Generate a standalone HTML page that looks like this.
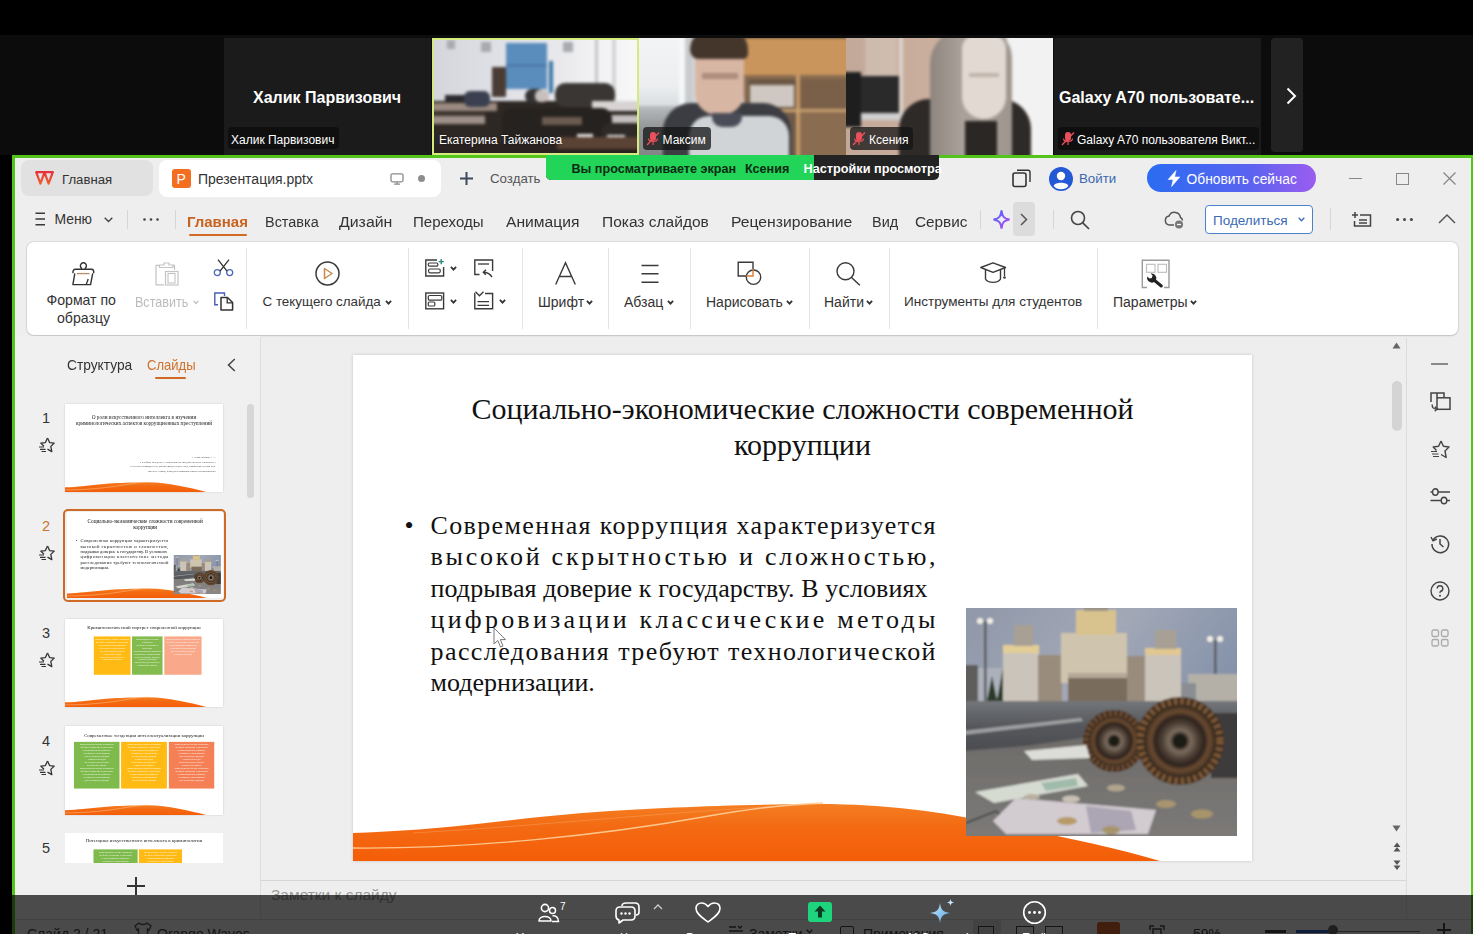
<!DOCTYPE html>
<html><head><meta charset="utf-8">
<style>
*{box-sizing:border-box;margin:0;padding:0}
html,body{width:1473px;height:934px;overflow:hidden;background:#000;font-family:"Liberation Sans",sans-serif}
.a{position:absolute}
.t{position:absolute;white-space:nowrap;line-height:1}
svg{position:absolute;overflow:visible}
</style></head><body>
<!-- gallery strip -->
<div class="a" style="left:0;top:35px;width:1473px;height:120px;background:#0c0c0c"></div>
<!-- tile 1 -->
<div class="a" style="left:224px;top:38px;width:207px;height:117px;background:#1b1b1b"></div>
<div class="t" style="left:253px;top:89.5px;font-size:16px;font-weight:700;color:#fff">Халик Парвизович</div>
<div class="a" style="left:228px;top:127px;width:111px;height:22px;background:#0f0f0f;border-radius:4px"></div>
<div class="t" style="left:231px;top:134px;font-size:12px;color:#fff">Халик Парвизович</div>
<!-- tile 2 -->
<div class="a" id="tile2" style="left:432px;top:38px;width:207px;height:117px;overflow:hidden;background:#d3d4d8">
  <div class="a" style="left:-5px;top:-5px;width:217px;height:127px;filter:blur(1.4px)">
    <div class="a" style="left:0;top:0;width:217px;height:80px;background:linear-gradient(90deg,#d4d5da 0%,#e0e1e6 35%,#e8e8ec 60%,#f2f2f4 78%,#f8f8f8 100%)"></div>
    <div class="a" style="left:168px;top:0;width:3px;height:80px;background:#c4c4c8"></div>
    <div class="a" style="left:185px;top:0;width:4px;height:75px;background:#d4d4d8"></div>
    <div class="a" style="left:20px;top:7px;width:8px;height:9px;background:#a8aab0"></div>
    <div class="a" style="left:54px;top:9px;width:10px;height:10px;background:#a8aab0"></div>
    <div class="a" style="left:136px;top:9px;width:10px;height:10px;background:#a8aab0"></div>
    <div class="a" style="left:79px;top:10px;width:41px;height:46px;background:#5a8cbc"></div>
    <div class="a" style="left:79px;top:32px;width:41px;height:1px;background:#3a5a88"></div>
    <div class="a" style="left:65px;top:34px;width:14px;height:30px;background:#4a3c34"></div>
    <div class="a" style="left:122px;top:28px;width:4px;height:32px;background:#3a78a6"></div>
    <div class="a" style="left:0;top:68px;width:217px;height:59px;background:#2e2824"></div>
    <div class="a" style="left:18px;top:62px;width:22px;height:6px;background:#2a2a2e"></div>
    <div class="a" style="left:0;top:70px;width:70px;height:8px;background:#9a8a80"></div>
    <div class="a" style="left:0;top:79px;width:58px;height:4px;background:#403630"></div>
    <div class="a" style="left:0;top:83px;width:58px;height:8px;background:#9c9088"></div>
    <div class="a" style="left:37px;top:58px;width:26px;height:16px;background:#3b4050;border-radius:6px"></div>
    <div class="a" style="left:98px;top:56px;width:20px;height:14px;background:#333;border-radius:7px"></div>
    <div class="a" style="left:108px;top:57px;width:14px;height:12px;background:#c8c0bc;border-radius:5px"></div>
    <div class="a" style="left:128px;top:50px;width:60px;height:24px;background:#3a3634;border-radius:10px"></div>
    <div class="a" style="left:165px;top:68px;width:52px;height:10px;background:#d8d4d4"></div>
    <div class="a" style="left:160px;top:82px;width:57px;height:12px;background:#c4c0c0"></div>
    <div class="a" style="left:75px;top:75px;width:110px;height:35px;background:#262220;border-radius:10px"></div>
    <div class="a" style="left:115px;top:84px;width:40px;height:8px;background:#6a5a50"></div>
    <div class="a" style="left:175px;top:90px;width:42px;height:25px;background:#2e2a28;border-radius:8px"></div>
    <div class="a" style="left:150px;top:101px;width:16px;height:7px;background:#e8e8e8"></div>
    <div class="a" style="left:180px;top:102px;width:18px;height:8px;background:#e8e8e8"></div>
    <div class="a" style="left:0;top:110px;width:217px;height:17px;background:#2a2220"></div>
    <div class="a" style="left:130px;top:104px;width:87px;height:12px;background:#5a4234"></div>
  </div>
  <div class="a" style="left:0;top:0;width:207px;height:117px;border:2px solid #d6eb7e"></div>
  <div class="t" style="left:7px;top:96px;font-size:12px;color:#fff;text-shadow:0 0 2px rgba(0,0,0,0.6)">Екатерина Тайжанова</div>
</div>
<!-- tile 3 -->
<div class="a" id="tile3" style="left:639px;top:38px;width:207px;height:117px;overflow:hidden;background:#9a9a9a">
  <div class="a" style="left:-5px;top:-5px;width:217px;height:127px;filter:blur(1.6px)">
    <div class="a" style="left:0;top:0;width:60px;height:75px;background:linear-gradient(180deg,#f2f4f5 0%,#eceef0 70%,#d8dcde 100%)"></div>
    <div class="a" style="left:0;top:73px;width:60px;height:60px;background:linear-gradient(180deg,#b8bcbe 0%,#909294 40%,#7d7f82 100%)"></div>
    <div class="a" style="left:45px;top:0;width:6px;height:75px;background:#f6f8f8"></div>
    <div class="a" style="left:51px;top:0;width:8px;height:75px;background:#c8ccce"></div>
    <div class="a" style="left:59px;top:0;width:52px;height:75px;background:#d4d8da"></div>
    <div class="a" style="left:110px;top:0;width:107px;height:5px;background:#4a3c30"></div>
    <div class="a" style="left:110px;top:5px;width:107px;height:37px;background:#c9955c"></div>
    <div class="a" style="left:110px;top:42px;width:107px;height:85px;background:#8a6c50"></div>
    <div class="a" style="left:114px;top:46px;width:48px;height:30px;background:#6a5644"></div>
    <div class="a" style="left:116px;top:52px;width:44px;height:22px;background:#cfc8c2"></div>
    <div class="a" style="left:166px;top:46px;width:48px;height:30px;background:#7a6048"></div>
    <div class="a" style="left:162px;top:42px;width:4px;height:85px;background:#c89a68"></div>
    <div class="a" style="left:110px;top:76px;width:107px;height:3px;background:#c8a070"></div>
    <div class="a" style="left:114px;top:80px;width:48px;height:47px;background:#6e5a48"></div>
    <div class="a" style="left:29px;top:70px;width:128px;height:62px;background:#3b3d42;border-radius:28px 28px 0 0"></div>
    <div class="a" style="left:61px;top:10px;width:49px;height:72px;background:#d8b6a4;border-radius:12px 12px 22px 22px"></div>
    <div class="a" style="left:56px;top:-6px;width:58px;height:32px;background:#45362c;border-radius:26px 26px 6px 10px"></div>
    <div class="a" style="left:68px;top:40px;width:36px;height:6px;background:#9a7a6a;opacity:0.7"></div>
    <div class="a" style="left:55px;top:83px;width:100px;height:50px;background:#d0d4d6;border-radius:20px 20px 0 0"></div>
    <div class="a" style="left:78px;top:80px;width:30px;height:14px;background:#4a4c58;border-radius:0 0 10px 10px"></div>
  </div>
  <div class="a" style="left:4px;top:89px;width:68px;height:23px;background:rgba(20,20,20,0.75);border-radius:4px"></div>
  <svg style="left:7px;top:93px" width="14" height="15" viewBox="0 0 14 15"><rect x="4" y="1" width="6" height="9" rx="3" fill="#e8505b"/><path d="M2.5 7.5 C2.5 11.5 11.5 11.5 11.5 7.5 M7 11 V14" fill="none" stroke="#e8505b" stroke-width="1.2"/><path d="M1 14 L13 1.5" stroke="#e8505b" stroke-width="1.4"/></svg>
  <div class="t" style="left:23.5px;top:96px;font-size:12px;color:#fff">Максим</div>
</div>
<!-- tile 4 -->
<div class="a" id="tile4" style="left:846px;top:38px;width:207px;height:117px;overflow:hidden;background:#bbb">
  <div class="a" style="left:-5px;top:-5px;width:217px;height:127px;filter:blur(1.6px)">
    <div class="a" style="left:0;top:0;width:120px;height:127px;background:linear-gradient(90deg,#c1a898 0%,#c9ad9c 60%,#cdb09e 100%)"></div>
    <div class="a" style="left:24px;top:0;width:32px;height:45px;background:#d8ccc4;opacity:0.5"></div>
    <div class="a" style="left:58px;top:0;width:4px;height:90px;background:#dcd2cc"></div>
    <div class="a" style="left:0;top:39px;width:20px;height:55px;background:#1e1e1e"></div>
    <div class="a" style="left:20px;top:43px;width:38px;height:38px;background:#2a2a2a"></div>
    <div class="a" style="left:20px;top:80px;width:40px;height:7px;background:#d0d0d0"></div>
    <div class="a" style="left:166px;top:0;width:51px;height:127px;background:#f2f2f2"></div>
    <div class="a" style="left:58px;top:66px;width:132px;height:62px;background:#2e2a28;border-radius:30px 30px 0 0"></div>
    <div class="a" style="left:89px;top:-5px;width:82px;height:132px;background:linear-gradient(90deg,#8e867e 0%,#aaa29a 40%,#9e968e 100%);border-radius:36px 30px 0 0"></div>
    <div class="a" style="left:121px;top:2px;width:44px;height:84px;background:#e2dad2;border-radius:14px 14px 22px 22px"></div>
    <div class="a" style="left:128px;top:40px;width:30px;height:4px;background:#a89890;opacity:0.6"></div>
    <div class="a" style="left:124px;top:88px;width:32px;height:39px;background:#2b2725"></div>
  </div>
  <div class="a" style="left:4px;top:89px;width:63px;height:23px;background:rgba(20,20,20,0.75);border-radius:4px"></div>
  <svg style="left:6px;top:93px" width="14" height="15" viewBox="0 0 14 15"><rect x="4" y="1" width="6" height="9" rx="3" fill="#e8505b"/><path d="M2.5 7.5 C2.5 11.5 11.5 11.5 11.5 7.5 M7 11 V14" fill="none" stroke="#e8505b" stroke-width="1.2"/><path d="M1 14 L13 1.5" stroke="#e8505b" stroke-width="1.4"/></svg>
  <div class="t" style="left:23px;top:96px;font-size:12px;color:#fff">Ксения</div>
</div>
<!-- tile 5 -->
<div class="a" style="left:1054px;top:38px;width:207px;height:117px;background:#1b1b1b"></div>
<div class="t" style="left:1059px;top:89.5px;font-size:16px;font-weight:700;color:#fff">Galaxy A70 пользовате...</div>
<div class="a" style="left:1058px;top:127px;width:201px;height:23px;background:#0f0f0f;border-radius:4px"></div>
<svg style="left:1061px;top:131px" width="14" height="15" viewBox="0 0 14 15"><rect x="4" y="1" width="6" height="9" rx="3" fill="#e8505b"/><path d="M2.5 7.5 C2.5 11.5 11.5 11.5 11.5 7.5 M7 11 V14" fill="none" stroke="#e8505b" stroke-width="1.2"/><path d="M1 14 L13 1.5" stroke="#e8505b" stroke-width="1.4"/></svg>
<div class="t" style="left:1077px;top:134px;font-size:12px;color:#fff">Galaxy A70 пользователя Викт...</div>
<!-- next arrow -->
<div class="a" style="left:1271px;top:38px;width:32px;height:114px;background:#222;border-radius:4px"></div>
<svg style="left:1286px;top:87px" width="11" height="18" viewBox="0 0 11 18"><path d="M1.5 1.5 L9 9 L1.5 16.5" fill="none" stroke="#fff" stroke-width="2"/></svg>

<!-- shared screen -->
<div class="a" id="screen" style="left:12px;top:155px;width:1461px;height:779px;background:#52c41a">
  <div class="a" style="left:3px;top:3px;width:1456px;height:776px;background:#eeeeee;overflow:hidden" id="wps">
  </div>
</div>

<!-- ===== WPS title bar ===== -->
<div class="a" style="left:21px;top:160px;width:132px;height:36px;background:#e1e1e1;border-radius:8px"></div>
<svg style="left:35px;top:171px" width="19" height="14" viewBox="0 0 19 14"><defs><linearGradient id="wl" x1="0" y1="0" x2="0" y2="1"><stop offset="0" stop-color="#e8303a"/><stop offset="1" stop-color="#f0602a"/></linearGradient></defs><path d="M1.2 1.2 H9.6 L5.4 12.6 Z M9.4 1.2 H17.8 L13.6 12.6 Z" fill="none" stroke="url(#wl)" stroke-width="2.2" stroke-linejoin="round"/></svg>
<div class="t" style="left:62px;top:173px;font-size:13.2px;color:#333">Главная</div>
<div class="a" style="left:159px;top:160px;width:282px;height:37px;background:#fff;border-radius:8px"></div>
<div class="a" style="left:172px;top:169px;width:19px;height:19px;background:#f46e22;border-radius:3px"></div>
<div class="t" style="left:176.5px;top:171.5px;font-size:14px;color:#fff">P</div>
<div class="t" style="left:198px;top:172px;font-size:14px;color:#333">Презентация.pptx</div>
<svg style="left:390px;top:173px" width="14" height="12" viewBox="0 0 14 12"><rect x="1" y="0.8" width="12" height="8" rx="1.5" fill="none" stroke="#8a8a8a" stroke-width="1.3"/><path d="M4 11.2 H10 M7 9 V11" stroke="#8a8a8a" stroke-width="1.3"/></svg>
<div class="a" style="left:418px;top:175px;width:7px;height:7px;background:#8d8d8d;border-radius:50%"></div>
<svg style="left:459px;top:171px" width="15" height="15" viewBox="0 0 15 15"><path d="M7.5 1 V14 M1 7.5 H14" stroke="#3d4a5c" stroke-width="2"/></svg>
<div class="t" style="left:490px;top:172px;font-size:13.3px;color:#555">Создать</div>

<svg style="left:1012px;top:169px" width="19" height="19" viewBox="0 0 19 19"><rect x="1" y="4" width="13" height="13.5" rx="2" fill="none" stroke="#333" stroke-width="1.6"/><path d="M5 1.2 H16 a2 2 0 0 1 2 2 V13" fill="none" stroke="#333" stroke-width="1.4"/></svg>
<svg style="left:1049px;top:167px" width="24" height="24" viewBox="0 0 24 24"><circle cx="12" cy="12" r="12" fill="#2459d6"/><circle cx="12" cy="9" r="4.2" fill="#fff"/><path d="M4.6 19 C6 14.8 18 14.8 19.4 19 C17.5 21.3 15 22.3 12 22.3 C9 22.3 6.5 21.3 4.6 19Z" fill="#fff"/></svg>
<div class="t" style="left:1079px;top:172px;font-size:13.3px;color:#3a68b0">Войти</div>
<div class="a" style="left:1147px;top:164px;width:169px;height:28px;border-radius:14px;background:linear-gradient(90deg,#2a6cf2 0%,#5a63f0 60%,#9a5df0 100%)"></div>
<svg style="left:1167px;top:170px" width="14" height="17" viewBox="0 0 14 17"><path d="M9 0.5 L1.2 9.5 H6.2 L4.6 16.5 L12.8 7 H7.6 Z" fill="#fff" stroke="#fff" stroke-width="0.6" stroke-linejoin="round"/></svg>
<div class="t" style="left:1186.5px;top:173px;font-size:13.8px;color:#fff">Обновить сейчас</div>
<div class="a" style="left:1349px;top:177.5px;width:13px;height:1.3px;background:#888"></div>
<div class="a" style="left:1396px;top:172.5px;width:12.5px;height:12.5px;border:1.3px solid #888"></div>
<svg style="left:1443px;top:172px" width="13" height="13" viewBox="0 0 13 13"><path d="M0.5 0.5 L12.5 12.5 M12.5 0.5 L0.5 12.5" stroke="#888" stroke-width="1.3"/></svg>

<!-- ===== menu row ===== -->
<svg style="left:35px;top:212px" width="11" height="14" viewBox="0 0 11 14"><path d="M0.5 1.2 H10 M0.5 7 H10 M0.5 12.8 H10" stroke="#3a3a3a" stroke-width="1.4"/></svg>
<div class="t" style="left:54.5px;top:213.1px;font-size:13.9px;color:#333">Меню</div>
<svg style="left:103.5px;top:217px" width="9" height="6" viewBox="0 0 9 6"><path d="M0.7 0.8 L4.5 4.6 L8.3 0.8" fill="none" stroke="#444" stroke-width="1.4"/></svg>
<div class="a" style="left:127px;top:210px;width:1px;height:19px;background:#d6d6d6"></div>
<svg style="left:143px;top:218px" width="16" height="3" viewBox="0 0 16 3"><circle cx="1.5" cy="1.5" r="1.3" fill="#444"/><circle cx="8" cy="1.5" r="1.3" fill="#444"/><circle cx="14.5" cy="1.5" r="1.3" fill="#444"/></svg>
<div class="a" style="left:175px;top:210px;width:1px;height:19px;background:#d6d6d6"></div>
<div class="t" style="left:186.6px;top:213.5px;font-size:15.4px;font-weight:700;color:#c8621e;transform:scaleX(0.973);transform-origin:0 0">Главная</div>
<div class="a" style="left:189px;top:233.5px;width:57.5px;height:2.5px;background:#d06a24;border-radius:2px"></div>
<div class="t" style="left:265px;top:213.5px;font-size:15.4px;color:#333;transform:scaleX(0.939);transform-origin:0 0">Вставка</div>
<div class="t" style="left:338.5px;top:213.5px;font-size:15.4px;color:#333;transform:scaleX(1.031);transform-origin:0 0">Дизайн</div>
<div class="t" style="left:413px;top:213.5px;font-size:15.4px;color:#333;transform:scaleX(0.978);transform-origin:0 0">Переходы</div>
<div class="t" style="left:506px;top:213.5px;font-size:15.4px;color:#333;transform:scaleX(1.017);transform-origin:0 0">Анимация</div>
<div class="t" style="left:601.8px;top:213.5px;font-size:15.4px;color:#333;transform:scaleX(1.008);transform-origin:0 0">Показ слайдов</div>
<div class="t" style="left:731px;top:213.5px;font-size:15.4px;color:#333;transform:scaleX(1.021);transform-origin:0 0">Рецензирование</div>
<div class="t" style="left:871.9px;top:213.5px;font-size:15.4px;color:#333;transform:scaleX(0.939);transform-origin:0 0">Вид</div>
<div class="t" style="left:914.7px;top:213.5px;font-size:15.4px;color:#333;transform:scaleX(0.996);transform-origin:0 0">Сервис</div>
<div class="a" style="left:980px;top:210px;width:1px;height:19px;background:#d6d6d6"></div>
<svg style="left:993px;top:210px" width="17" height="19" viewBox="0 0 17 19"><defs><linearGradient id="ai" x1="0" y1="0" x2="1" y2="1"><stop offset="0" stop-color="#4b6bff"/><stop offset="1" stop-color="#b548f0"/></linearGradient></defs><path d="M8.5 0.5 C9.3 6.5 10.5 8.5 16.5 9.5 C10.5 10.5 9.3 12.5 8.5 18.5 C7.7 12.5 6.5 10.5 0.5 9.5 C6.5 8.5 7.7 6.5 8.5 0.5Z" fill="none" stroke="url(#ai)" stroke-width="2"/></svg>
<div class="a" style="left:1013px;top:202px;width:22px;height:34px;background:#dcdcdc;border-radius:4px"></div>
<svg style="left:1020px;top:213px" width="8" height="13" viewBox="0 0 8 13"><path d="M1 1 L6.5 6.5 L1 12" fill="none" stroke="#555" stroke-width="1.5"/></svg>
<div class="a" style="left:1053px;top:210px;width:1px;height:19px;background:#d6d6d6"></div>
<svg style="left:1070px;top:210px" width="20" height="20" viewBox="0 0 20 20"><circle cx="8" cy="8" r="6.5" fill="none" stroke="#444" stroke-width="1.6"/><path d="M12.8 12.8 L19 19" stroke="#444" stroke-width="1.7"/></svg>
<svg style="left:1164px;top:211px" width="21" height="18" viewBox="0 0 21 18"><path d="M10 14 H5.5 A4.5 4.5 0 0 1 5 5.1 A6 6 0 0 1 16.5 6.5 A3.7 3.7 0 0 1 18.5 9.5" fill="none" stroke="#555" stroke-width="1.5"/><circle cx="15" cy="13.5" r="4" fill="#777"/><path d="M13 13.5 H17" stroke="#fff" stroke-width="1.3"/></svg>
<div class="a" style="left:1205px;top:205px;width:108px;height:29px;border:1px solid #4c82cc;border-radius:4px;background:#fff"></div>
<div class="t" style="left:1213px;top:214px;font-size:13.5px;color:#3a6ab4">Поделиться</div>
<svg style="left:1298px;top:217px" width="7" height="5" viewBox="0 0 7 5"><path d="M0.7 0.8 L3.5 3.7 L6.3 0.8" fill="none" stroke="#3a6ab4" stroke-width="1.3"/></svg>
<div class="a" style="left:1330px;top:208px;width:1px;height:22px;background:#d6d6d6"></div>
<svg style="left:1352px;top:211px" width="20" height="17" viewBox="0 0 20 17"><path d="M3 1 V7 M0 4 H6" stroke="#444" stroke-width="1.5"/><path d="M8 4 H18.5 V15 H2.5 V10" fill="none" stroke="#444" stroke-width="1.5"/><path d="M7 9 H15 M7 12 H15" stroke="#444" stroke-width="1.3"/></svg>
<svg style="left:1396px;top:218px" width="17" height="3" viewBox="0 0 17 3"><circle cx="1.6" cy="1.5" r="1.5" fill="#444"/><circle cx="8.5" cy="1.5" r="1.5" fill="#444"/><circle cx="15.4" cy="1.5" r="1.5" fill="#444"/></svg>
<svg style="left:1438px;top:214px" width="18" height="10" viewBox="0 0 18 10"><path d="M1 9 L9 1 L17 9" fill="none" stroke="#555" stroke-width="1.5"/></svg>


<!-- ===== ribbon ===== -->
<div class="a" style="left:27px;top:242px;width:1431px;height:93px;background:#fff;border-radius:7px;box-shadow:0 0 0 1px rgba(0,0,0,0.07),0 1px 2px rgba(0,0,0,0.12)"></div>
<svg style="left:72px;top:262px" width="23" height="24" viewBox="0 0 23 24"><path d="M9.4 7.3 V6 A3 3 0 1 1 13.4 6 V7.3" fill="none" stroke="#333" stroke-width="1.4"/><path d="M1 11.3 V9.5 A2.2 2.2 0 0 1 3.2 7.3 H19.5 A2.2 2.2 0 0 1 21.7 9.5 V11.3" fill="none" stroke="#333" stroke-width="1.4"/><path d="M2.8 11.3 L0.9 22.6 H18.6 L20.7 11.3" fill="none" stroke="#333" stroke-width="1.4" stroke-linejoin="round"/><path d="M5 11.6 H17.5" stroke="#b88a6a" stroke-width="1.3"/><path d="M16.2 17 L14.4 22" stroke="#333" stroke-width="1.3"/></svg>
<div class="t" style="left:46.5px;top:292.6px;font-size:14.1px;color:#333">Формат по</div>
<div class="t" style="left:57px;top:311.4px;font-size:14.1px;color:#333">образцу</div>
<svg style="left:155px;top:262px" width="25" height="24" viewBox="0 0 25 24"><path d="M4.5 3.3 H1 V22.8 H9" fill="none" stroke="#c4c4c4" stroke-width="1.2"/><path d="M18 3.3 H19.5 V8" fill="none" stroke="#c4c4c4" stroke-width="1.2"/><path d="M4.5 5.5 V3 H9 V1 H14 V3 H18 V5.5 Z" fill="none" stroke="#c4c4c4" stroke-width="1.2"/><rect x="10.5" y="9.5" width="12.5" height="13.5" fill="none" stroke="#c4c4c4" stroke-width="1.2"/><rect x="13" y="11.5" width="7" height="9.5" fill="none" stroke="#c4c4c4" stroke-width="1.1"/></svg>
<div class="t" style="left:134.5px;top:294.5px;font-size:14.1px;color:#bbb;transform:scaleX(0.89);transform-origin:0 0">Вставить</div>
<svg style="left:193px;top:300px" width="6" height="5" viewBox="0 0 6 5"><path d="M0.6 0.8 L3 3.6 L5.4 0.8" fill="none" stroke="#bbb" stroke-width="1.3"/></svg>
<svg style="left:213px;top:259px" width="21" height="18" viewBox="0 0 21 18"><circle cx="4.3" cy="13.6" r="3" fill="none" stroke="#5068b8" stroke-width="1.3"/><circle cx="16.7" cy="13.6" r="3" fill="none" stroke="#5068b8" stroke-width="1.3"/><path d="M7 12.2 L16 0.6 M14 12.2 L5 0.6" stroke="#333" stroke-width="1.3"/></svg>
<svg style="left:213px;top:292px" width="21" height="19" viewBox="0 0 21 19"><path d="M11.5 4 V1 H1.8 V12.8 H5" fill="none" stroke="#4a5cb8" stroke-width="1.4"/><path d="M8 5.5 H14.5 L19.6 10.5 V18 H8 Z" fill="none" stroke="#333" stroke-width="1.5" stroke-linejoin="round"/><path d="M14.2 5.5 V10.8 H19.6" fill="none" stroke="#333" stroke-width="1.3"/></svg>
<div class="a" style="left:246px;top:248px;width:1px;height:81px;background:#e4e4e4"></div>

<svg style="left:315px;top:261px" width="25" height="25" viewBox="0 0 25 25"><circle cx="12.5" cy="12.5" r="11.5" fill="none" stroke="#3a3a3a" stroke-width="1.5"/><path d="M9.5 7.5 L17 12.5 L9.5 17.5 Z" fill="none" stroke="#c9874c" stroke-width="1.5" stroke-linejoin="round"/></svg>
<div class="t" style="left:262.5px;top:295px;font-size:13.4px;color:#333">С текущего слайда</div>
<svg style="left:385px;top:300px" width="7" height="5" viewBox="0 0 7 5"><path d="M0.9 0.9 L3.5 3.6 L6.1 0.9" fill="none" stroke="#333" stroke-width="1.8"/></svg>
<div class="a" style="left:408px;top:248px;width:1px;height:81px;background:#e4e4e4"></div>

<svg style="left:425px;top:259px" width="20" height="18" viewBox="0 0 20 18"><path d="M12 1 H0.8 V17 H18.6 V8" fill="none" stroke="#3a3a3a" stroke-width="1.4"/><rect x="3.3" y="4" width="9.5" height="3.2" rx="1.2" fill="none" stroke="#3a3a3a" stroke-width="1.2"/><rect x="3.6" y="10" width="11.6" height="3.8" rx="1.2" fill="none" stroke="#3a3a3a" stroke-width="1.2"/><path d="M16.2 0 V5.2 M13.6 2.6 H18.8" stroke="#2a8a78" stroke-width="1.4"/></svg>
<svg style="left:450px;top:266px" width="7" height="5" viewBox="0 0 7 5"><path d="M0.9 0.9 L3.5 3.6 L6.1 0.9" fill="none" stroke="#333" stroke-width="1.8"/></svg>
<svg style="left:474px;top:259px" width="20" height="19" viewBox="0 0 20 19"><path d="M5.5 15.5 H0.8 V1 H18.6 V12" fill="none" stroke="#3a3a3a" stroke-width="1.4"/><path d="M4 5 H15" stroke="#3a3a3a" stroke-width="1.3"/><path d="M18 18 C16 15 13 13.2 9.5 13.2 M12 10.8 L9.3 13.2 L11.8 15.8" fill="none" stroke="#3a3a3a" stroke-width="1.4"/></svg>
<svg style="left:425px;top:292px" width="20" height="18" viewBox="0 0 20 18"><rect x="0.8" y="1" width="17.8" height="15.8" fill="none" stroke="#3a3a3a" stroke-width="1.4"/><rect x="3.3" y="3.5" width="13.5" height="4.7" rx="1.3" fill="none" stroke="#3a3a3a" stroke-width="1.2"/><rect x="3.3" y="10" width="6.5" height="4" rx="1.1" fill="none" stroke="#3a3a3a" stroke-width="1.2"/></svg>
<svg style="left:450px;top:299px" width="7" height="5" viewBox="0 0 7 5"><path d="M0.9 0.9 L3.5 3.6 L6.1 0.9" fill="none" stroke="#333" stroke-width="1.8"/></svg>
<svg style="left:474px;top:291px" width="20" height="19" viewBox="0 0 20 19"><path d="M1 2.5 H0.8 V17.7 H18.6 V2.5 H11" fill="none" stroke="#3a3a3a" stroke-width="1.4"/><path d="M1.5 0.8 L5.5 4.8 L9.5 0.8" fill="none" stroke="#3a3a3a" stroke-width="1.4"/><path d="M3.5 10.7 H15 M3.5 14.3 H15" stroke="#3a3a3a" stroke-width="1.3"/></svg>
<svg style="left:499px;top:299px" width="7" height="5" viewBox="0 0 7 5"><path d="M0.9 0.9 L3.5 3.6 L6.1 0.9" fill="none" stroke="#333" stroke-width="1.8"/></svg>
<div class="a" style="left:522px;top:248px;width:1px;height:81px;background:#e4e4e4"></div>

<svg style="left:555px;top:262px" width="21" height="23" viewBox="0 0 21 23"><path d="M0.7 22.5 L10.5 0.8 L20.3 22.5 M4.5 14.5 H16.5" fill="none" stroke="#3a3a3a" stroke-width="1.4"/></svg>
<div class="t" style="left:538px;top:295px;font-size:14px;color:#333">Шрифт</div>
<svg style="left:586px;top:300px" width="7" height="5" viewBox="0 0 7 5"><path d="M0.9 0.9 L3.5 3.6 L6.1 0.9" fill="none" stroke="#333" stroke-width="1.8"/></svg>
<div class="a" style="left:608px;top:248px;width:1px;height:81px;background:#e4e4e4"></div>
<svg style="left:641px;top:264px" width="18" height="20" viewBox="0 0 18 20"><path d="M0.5 1.5 H17.5 M0.5 9.8 H17.5 M0.5 18.2 H17.5" stroke="#3a3a3a" stroke-width="1.4"/></svg>
<div class="t" style="left:624px;top:295px;font-size:14px;color:#333">Абзац</div>
<svg style="left:667px;top:300px" width="7" height="5" viewBox="0 0 7 5"><path d="M0.9 0.9 L3.5 3.6 L6.1 0.9" fill="none" stroke="#333" stroke-width="1.8"/></svg>
<div class="a" style="left:690px;top:248px;width:1px;height:81px;background:#e4e4e4"></div>
<svg style="left:737px;top:261px" width="25" height="25" viewBox="0 0 25 25"><path d="M16 8 V1.2 H1.2 V15 H9" fill="none" stroke="#3a3a3a" stroke-width="1.4"/><circle cx="16.5" cy="16.2" r="7.2" fill="none" stroke="#3a3a3a" stroke-width="1.4"/><path d="M9.3 15 H16 V8.5" fill="none" stroke="#e07a3a" stroke-width="1.4"/></svg>
<div class="t" style="left:706px;top:295px;font-size:14px;color:#333">Нарисовать</div>
<svg style="left:786px;top:300px" width="7" height="5" viewBox="0 0 7 5"><path d="M0.9 0.9 L3.5 3.6 L6.1 0.9" fill="none" stroke="#333" stroke-width="1.8"/></svg>
<div class="a" style="left:808.5px;top:248px;width:1px;height:81px;background:#e4e4e4"></div>
<svg style="left:836px;top:262px" width="25" height="24" viewBox="0 0 25 24"><circle cx="9.5" cy="9.3" r="8.5" fill="none" stroke="#3a3a3a" stroke-width="1.4"/><path d="M15.5 15.5 L23.8 23.3" stroke="#3a3a3a" stroke-width="1.5"/></svg>
<div class="t" style="left:824px;top:295px;font-size:14px;color:#333">Найти</div>
<svg style="left:866px;top:300px" width="7" height="5" viewBox="0 0 7 5"><path d="M0.9 0.9 L3.5 3.6 L6.1 0.9" fill="none" stroke="#333" stroke-width="1.8"/></svg>
<div class="a" style="left:888.5px;top:248px;width:1px;height:81px;background:#e4e4e4"></div>
<svg style="left:980px;top:262px" width="27" height="22" viewBox="0 0 27 22"><path d="M13 0.8 L25.5 5.5 L13 10.3 L0.8 5.5 Z" fill="none" stroke="#3a3a3a" stroke-width="1.4" stroke-linejoin="round"/><path d="M5.5 7.5 V17 C8 21.5 18 21.5 20.5 17 V7.5" fill="none" stroke="#3a3a3a" stroke-width="1.4"/><path d="M24.5 6 V14" stroke="#3a3a3a" stroke-width="1.3"/><circle cx="24.5" cy="15.5" r="1.3" fill="#3a3a3a"/></svg>
<div class="t" style="left:904px;top:295px;font-size:13.55px;color:#333">Инструменты для студентов</div>
<div class="a" style="left:1097px;top:248px;width:1px;height:81px;background:#e4e4e4"></div>
<svg style="left:1141px;top:259px" width="30" height="30" viewBox="0 0 30 30"><path d="M6 28.5 H1.3 V1.3 H28 V28.5 H23" fill="none" stroke="#9a9a9a" stroke-width="1.4"/><rect x="5.5" y="5.3" width="8.5" height="8" fill="none" stroke="#bdbdbd" stroke-width="1.1"/><rect x="17" y="5.3" width="8.5" height="8" fill="none" stroke="#bdbdbd" stroke-width="1.1"/><path d="M13 21 L20.3 27" stroke="#222" stroke-width="3" stroke-linecap="round"/><path d="M9.6 14.6 L11.6 16.6 L10.8 18.9 L8.4 19.6 L6.3 17.5 A4.8 4.8 0 0 0 14.8 21.6 A4.8 4.8 0 0 0 9.6 14.6Z" fill="#222"/></svg>
<div class="t" style="left:1113px;top:295px;font-size:14px;color:#333">Параметры</div>
<svg style="left:1190px;top:300px" width="7" height="5" viewBox="0 0 7 5"><path d="M0.9 0.9 L3.5 3.6 L6.1 0.9" fill="none" stroke="#333" stroke-width="1.8"/></svg>


<!-- ===== left panel ===== -->
<div class="a" style="left:15px;top:336px;width:245px;height:583px;background:#f0f0f0"></div>
<div class="t" style="left:66.7px;top:358px;font-size:14.3px;color:#333;transform:scaleX(0.962);transform-origin:0 0">Структура</div>
<div class="t" style="left:146.5px;top:358px;font-size:14.3px;color:#d0702a;transform:scaleX(0.912);transform-origin:0 0">Слайды</div>
<div class="a" style="left:155px;top:376.5px;width:31px;height:2.5px;background:#d06a24;border-radius:2px"></div>
<svg style="left:227px;top:358px" width="9" height="14" viewBox="0 0 9 14"><path d="M7.8 1 L1.5 7 L7.8 13" fill="none" stroke="#444" stroke-width="1.5"/></svg>
<div class="a" style="left:260px;top:338px;width:1px;height:600px;background:#dcdcdc"></div>
<div class="a" style="left:247px;top:404px;width:7px;height:94px;background:#d6d6d6;border-radius:4px"></div>

<div class="t" style="left:42px;top:411px;font-size:14.5px;color:#333">1</div>
<div class="t" style="left:42px;top:518.5px;font-size:14.5px;color:#c8742e">2</div>
<div class="t" style="left:42px;top:626px;font-size:14.5px;color:#333">3</div>
<div class="t" style="left:42px;top:733.5px;font-size:14.5px;color:#333">4</div>
<div class="t" style="left:42px;top:841px;font-size:14.5px;color:#333">5</div>
<svg style="left:38px;top:437px" width="17" height="16" viewBox="0 0 17 16"><path d="M9.5 1 L11.6 5.6 L16.2 6.1 L12.8 9.4 L13.8 14.6 L9.5 12.1" fill="none" stroke="#333" stroke-width="1.3" stroke-linejoin="round"/><path d="M9.5 1 L7.4 5.6 L2.8 6.1 L6 9.2" fill="none" stroke="#333" stroke-width="1.3" stroke-linejoin="round"/><path d="M1 10 H6 M2 12.3 H7.5 M3.5 14.5 H8" stroke="#333" stroke-width="1.2"/></svg>
<svg style="left:38px;top:545px" width="17" height="16" viewBox="0 0 17 16"><path d="M9.5 1 L11.6 5.6 L16.2 6.1 L12.8 9.4 L13.8 14.6 L9.5 12.1" fill="none" stroke="#333" stroke-width="1.3" stroke-linejoin="round"/><path d="M9.5 1 L7.4 5.6 L2.8 6.1 L6 9.2" fill="none" stroke="#333" stroke-width="1.3" stroke-linejoin="round"/><path d="M1 10 H6 M2 12.3 H7.5 M3.5 14.5 H8" stroke="#333" stroke-width="1.2"/></svg>
<svg style="left:38px;top:652px" width="17" height="16" viewBox="0 0 17 16"><path d="M9.5 1 L11.6 5.6 L16.2 6.1 L12.8 9.4 L13.8 14.6 L9.5 12.1" fill="none" stroke="#333" stroke-width="1.3" stroke-linejoin="round"/><path d="M9.5 1 L7.4 5.6 L2.8 6.1 L6 9.2" fill="none" stroke="#333" stroke-width="1.3" stroke-linejoin="round"/><path d="M1 10 H6 M2 12.3 H7.5 M3.5 14.5 H8" stroke="#333" stroke-width="1.2"/></svg>
<svg style="left:38px;top:760px" width="17" height="16" viewBox="0 0 17 16"><path d="M9.5 1 L11.6 5.6 L16.2 6.1 L12.8 9.4 L13.8 14.6 L9.5 12.1" fill="none" stroke="#333" stroke-width="1.3" stroke-linejoin="round"/><path d="M9.5 1 L7.4 5.6 L2.8 6.1 L6 9.2" fill="none" stroke="#333" stroke-width="1.3" stroke-linejoin="round"/><path d="M1 10 H6 M2 12.3 H7.5 M3.5 14.5 H8" stroke="#333" stroke-width="1.2"/></svg>

<!-- thumb 1 -->
<div class="a" style="left:65px;top:404px;width:158px;height:88px;background:#fff;box-shadow:0 0 2px rgba(0,0,0,0.15);overflow:hidden"><div class="a" style="left:0;top:0;width:899px;height:505px;transform:scale(0.1757508342602892,0.17425742574257425);transform-origin:0 0"><div class="t" style="left:0;top:55px;width:899px;text-align:center;font-family:'Liberation Serif',serif;font-size:30px;line-height:37px;color:#222">О роли искусственного интеллекта в изучении<br>криминологических аспектов коррупционных преступлений</div>
<div class="a" style="left:200px;top:292px;width:657px;text-align:right;font-family:'Liberation Serif',serif;font-size:15px;line-height:27px;color:#333">• Автор: Иванов А.А.<br>• Учебное заведение: Гуманитарный государственный университет<br>• Научный руководитель: доктор юридических наук, профессор Петров В.В.<br>&nbsp;&nbsp;Институт права, Кафедра уголовного права и криминологии</div>
<svg style="left:0;top:0" width="899" height="505" viewBox="0 0 899 505"><path d="M0 478 C40 476.5 70 474.5 100 471.5 C150 466 200 460 250 456.5 C300 453 380 449.5 460 449 C530 448.5 590 457 640 468 C700 480 760 492 807 506 L0 506Z" fill="url(#wg)"/><path d="M0 493 C120 494 250 480 350 462 C400 453 440 449 470 448" fill="none" stroke="#ffd09a" stroke-width="3" opacity="0.9"/></svg></div></div>
<!-- thumb 2 selected -->
<div class="a" style="left:63px;top:508.5px;width:163px;height:93.5px;border:2.5px solid #cf6a26;border-radius:5px"></div>
<div class="a" style="left:66.5px;top:512px;width:156.5px;height:86px;background:#fff;overflow:hidden"><div class="a" style="left:0;top:0;width:899px;height:505px;transform:scale(0.17408231368186874,0.1702970297029703);transform-origin:0 0"><svg style="left:0;top:0" width="899" height="505" viewBox="0 0 899 505"><path d="M0 478 C40 476.5 70 474.5 100 471.5 C150 466 200 460 250 456.5 C300 453 380 449.5 460 449 C530 448.5 590 457 640 468 C700 480 760 492 807 506 L0 506Z" fill="url(#wg)"/><path d="M0 493 C120 494 250 480 350 462 C400 453 440 449 470 448" fill="none" stroke="#ffd09a" stroke-width="3" opacity="0.9"/></svg><div class="t" style="left:0;top:35.6px;width:899px;text-align:center;font-family:'Liberation Serif',serif;font-size:30px;line-height:36px;color:#111">Социально-экономические сложности современной<br>коррупции</div>
<div class="t" style="left:50px;top:153.5px;font-family:'Liberation Serif',serif;font-size:26px;line-height:31.6px;color:#111">•</div>
<div class="a" style="left:77.5px;top:153.5px;font-family:'Liberation Serif',serif;font-size:26px;line-height:31.6px;color:#111;white-space:nowrap"><div style="letter-spacing:1.36px">Современная коррупция характеризуется</div><div style="letter-spacing:2.76px">высокой скрытностью и сложностью,</div><div style="letter-spacing:0.1px">подрывая доверие к государству. В условиях</div><div style="letter-spacing:3.24px">цифровизации классические методы</div><div style="letter-spacing:1.42px">расследования требуют технологической</div><div>модернизации.</div></div><svg style="left:613px;top:253px;overflow:hidden" width="271" height="228" viewBox="0 0 271 228">
  <defs>
    <linearGradient id="skyT" x1="0" y1="0" x2="1" y2="0.6"><stop offset="0" stop-color="#8f97a8"/><stop offset="0.45" stop-color="#a2a8b6"/><stop offset="1" stop-color="#7a8aa6"/></linearGradient>
    <linearGradient id="roadT" x1="0" y1="0" x2="0" y2="1"><stop offset="0" stop-color="#66686c"/><stop offset="1" stop-color="#4e5054"/></linearGradient>
    <linearGradient id="walkT" x1="0" y1="0" x2="0" y2="1"><stop offset="0" stop-color="#7e7c7a"/><stop offset="1" stop-color="#8a8886"/></linearGradient>
    <radialGradient id="g1T" cx="0.5" cy="0.5" r="0.5"><stop offset="0" stop-color="#2a221c"/><stop offset="0.18" stop-color="#3a3028"/><stop offset="0.3" stop-color="#8a7a6a"/><stop offset="0.6" stop-color="#5a4a3e"/><stop offset="0.72" stop-color="#3a2e26"/><stop offset="0.85" stop-color="#7a5838"/><stop offset="1" stop-color="#5a4230"/></radialGradient>
    <filter id="blT" x="-5%" y="-5%" width="110%" height="110%"><feGaussianBlur stdDeviation="0.9"/></filter>
  </defs>
  <g filter="url(#blT)">
  <rect x="-3" y="-3" width="277" height="234" fill="url(#skyT)"/>
  <rect x="-3" y="60" width="80" height="40" fill="#b9bcc2" opacity="0.6"/>
  <rect x="-3" y="57" width="15" height="42" fill="#5e5c5c"/>
  <path d="M20 97 L26 68 L32 97Z M30 97 L37 60 L44 97Z M40 97 L46 72 L52 97Z" fill="#2c3a2c"/>
  <rect x="18" y="13" width="2.5" height="85" fill="#5a5a60"/>
  <circle cx="14" cy="13" r="3" fill="#f2eee6"/><circle cx="24" cy="13" r="3" fill="#f2eee6"/>
  <rect x="248" y="32" width="2.5" height="65" fill="#5a5a60"/>
  <circle cx="244" cy="31" r="3" fill="#f2eee6"/><circle cx="254" cy="31" r="3" fill="#f2eee6"/>
  <rect x="222" y="66" width="52" height="32" fill="#b4b0a8"/>
  <rect x="210" y="75" width="20" height="22" fill="#8a8e92"/>
  <rect x="37" y="44" width="36" height="50" fill="#cac4ba"/>
  <rect x="37" y="37" width="36" height="8" fill="#e2cd96"/>
  <rect x="48" y="17" width="19" height="21" fill="#a8a094"/>
  <rect x="72" y="47" width="24" height="47" fill="#9a8c7c"/>
  <rect x="95" y="25" width="66" height="50" fill="#cfc4ae"/>
  <rect x="110" y="2" width="40" height="25" fill="#d8c28e"/>
  <rect x="118" y="-3" width="24" height="6" fill="#9a9488"/>
  <rect x="102" y="67" width="64" height="27" fill="#7a6c5c"/>
  <rect x="102" y="65" width="64" height="5" fill="#b4a898"/>
  <rect x="161" y="48" width="20" height="46" fill="#9a8c7c"/>
  <rect x="179" y="44" width="36" height="50" fill="#cac4ba"/>
  <rect x="179" y="40" width="36" height="7" fill="#e0c890"/>
  <rect x="189" y="22" width="21" height="19" fill="#a8a094"/>
  <rect x="-3" y="93" width="277" height="50" fill="url(#roadT)"/>
  <path d="M-3 123 L115 110 L117 113 L-3 127Z" fill="#b8b8b8" opacity="0.75"/>
  <path d="M-3 143 L60 138 L115 130 L150 128 L274 150 L274 231 L-3 231Z" fill="url(#walkT)"/>
  <path d="M0 215 L30 203 L40 212" fill="none" stroke="#3a3a3a" stroke-width="1.5"/>
  <rect x="245" y="105" width="29" height="65" fill="#3c3a3a"/>
  <circle cx="148" cy="133" r="31" fill="#4a3626"/>
  <circle cx="148" cy="133" r="28" fill="none" stroke="#6e4e34" stroke-width="6" stroke-dasharray="3 2.5"/>
  <circle cx="148" cy="133" r="24" fill="url(#g1T)"/>
  <circle cx="214" cy="133" r="44" fill="#4e3828"/>
  <circle cx="214" cy="133" r="40" fill="none" stroke="#7a5636" stroke-width="7" stroke-dasharray="3.5 3"/>
  <circle cx="214" cy="133" r="34" fill="url(#g1T)"/>
  <circle cx="148" cy="133" r="5" fill="#1e1a16"/>
  <circle cx="214" cy="133" r="7" fill="#1e1a16"/>
  <path d="M58 143 L120 137 L124 150 L66 152Z" fill="#dcdcd8"/>
  <path d="M9 184 L112 166 L122 178 L28 195Z" fill="#d6dbd2"/>
  <path d="M75 175 L110 170 L112 178 L80 183Z" fill="#8aae9a" opacity="0.7"/>
  <path d="M27 213 L50 190 L190 202 L182 226 L40 226Z" fill="#d2cbd0"/>
  <path d="M120 198 L165 203 L170 222 L125 225Z" fill="#9a94a8" opacity="0.7"/>
  <ellipse cx="66" cy="189" rx="8" ry="3" fill="#b8b0a0"/>
  <ellipse cx="105" cy="191" rx="9" ry="3.5" fill="#c8c0b4"/>
  <ellipse cx="150" cy="180" rx="9" ry="3.5" fill="#b0a48c"/>
  <ellipse cx="200" cy="196" rx="10" ry="4" fill="#a89470"/>
  <ellipse cx="236" cy="206" rx="11" ry="4.5" fill="#a8946a"/>
  <ellipse cx="101" cy="213" rx="10" ry="4" fill="#b89a68"/>
  <ellipse cx="145" cy="222" rx="9" ry="4" fill="#a8946a"/>
  </g>
</svg></div></div>
<!-- thumb 3 -->
<div class="a" style="left:65px;top:619px;width:158px;height:88px;background:#fff;box-shadow:0 0 2px rgba(0,0,0,0.15);overflow:hidden"><div class="a" style="left:0;top:0;width:899px;height:505px;transform:scale(0.1757508342602892,0.17425742574257425);transform-origin:0 0"><div class="t" style="left:0;top:36px;width:899px;text-align:center;font-family:'Liberation Serif',serif;font-size:28px;color:#222">Криминологический портрет современной коррупции</div><div class="a" style="left:164px;top:100px;width:209px;height:220px;background:#ffbb14;overflow:hidden;text-align:center;font-family:'Liberation Serif',serif;font-size:13px;line-height:17px;color:#fff;padding:6px">Коррупционные схемы становятся<br>всё более сложными и скрытыми<br>с использованием цифровых<br>технологий и криптовалют<br>для легализации доходов<br>и сокрытия следов<br>преступной деятельности<br>в различных сферах</div><div class="a" style="left:381px;top:100px;width:174px;height:220px;background:#84bb4f;overflow:hidden;text-align:center;font-family:'Liberation Serif',serif;font-size:13px;line-height:17px;color:#fff;padding:6px">Коррупционные схемы становятся<br>всё более сложными и скрытыми<br>с использованием цифровых<br>технологий и криптовалют<br>для легализации доходов<br>и сокрытия следов<br>преступной деятельности<br>в различных сферах</div><div class="a" style="left:565px;top:100px;width:212px;height:220px;background:#f9a88a;overflow:hidden;text-align:center;font-family:'Liberation Serif',serif;font-size:13px;line-height:17px;color:#fff;padding:6px">Коррупционные схемы становятся<br>всё более сложными и скрытыми<br>с использованием цифровых<br>технологий и криптовалют<br>для легализации доходов<br>и сокрытия следов</div><svg style="left:0;top:0" width="899" height="505" viewBox="0 0 899 505"><path d="M0 478 C40 476.5 70 474.5 100 471.5 C150 466 200 460 250 456.5 C300 453 380 449.5 460 449 C530 448.5 590 457 640 468 C700 480 760 492 807 506 L0 506Z" fill="url(#wg)"/><path d="M0 493 C120 494 250 480 350 462 C400 453 440 449 470 448" fill="none" stroke="#ffd09a" stroke-width="3" opacity="0.9"/></svg></div></div>
<!-- thumb 4 -->
<div class="a" style="left:65px;top:726px;width:158px;height:89px;background:#fff;box-shadow:0 0 2px rgba(0,0,0,0.15);overflow:hidden"><div class="a" style="left:0;top:0;width:899px;height:505px;transform:scale(0.1757508342602892,0.17623762376237623);transform-origin:0 0"><div class="t" style="left:0;top:38px;width:899px;text-align:center;font-family:'Liberation Serif',serif;font-size:28px;color:#222">Современные тенденции интеллектуализации коррупции</div><div class="a" style="left:51px;top:90px;width:259px;height:265px;background:#7fba4c;overflow:hidden;text-align:center;font-family:'Liberation Serif',serif;font-size:13px;line-height:17px;color:#fff;padding:6px">Коррупционные схемы становятся<br>всё более сложными и скрытыми<br>с использованием цифровых<br>технологий и криптовалют<br>для легализации доходов<br>и сокрытия следов<br>преступной деятельности<br>в различных сферах<br>Коррупционные схемы становятся<br>всё более сложными и скрытыми<br>с использованием цифровых<br>технологий и криптовалют<br>для легализации доходов</div><div class="a" style="left:319px;top:90px;width:261px;height:265px;background:#ffbb14;overflow:hidden;text-align:center;font-family:'Liberation Serif',serif;font-size:13px;line-height:17px;color:#fff;padding:6px">Коррупционные схемы становятся<br>всё более сложными и скрытыми<br>с использованием цифровых<br>технологий и криптовалют<br>для легализации доходов<br>и сокрытия следов<br>преступной деятельности<br>в различных сферах<br>Коррупционные схемы становятся<br>всё более сложными и скрытыми<br>с использованием цифровых<br>технологий и криптовалют<br>для легализации доходов</div><div class="a" style="left:591px;top:90px;width:258px;height:265px;background:#f58055;overflow:hidden;text-align:center;font-family:'Liberation Serif',serif;font-size:13px;line-height:17px;color:#fff;padding:6px">Коррупционные схемы становятся<br>всё более сложными и скрытыми<br>с использованием цифровых<br>технологий и криптовалют<br>для легализации доходов<br>и сокрытия следов<br>преступной деятельности<br>в различных сферах<br>Коррупционные схемы становятся<br>всё более сложными и скрытыми<br>с использованием цифровых<br>технологий и криптовалют<br>для легализации доходов</div><svg style="left:0;top:0" width="899" height="505" viewBox="0 0 899 505"><path d="M0 478 C40 476.5 70 474.5 100 471.5 C150 466 200 460 250 456.5 C300 453 380 449.5 460 449 C530 448.5 590 457 640 468 C700 480 760 492 807 506 L0 506Z" fill="url(#wg)"/><path d="M0 493 C120 494 250 480 350 462 C400 453 440 449 470 448" fill="none" stroke="#ffd09a" stroke-width="3" opacity="0.9"/></svg></div></div>
<!-- thumb 5 -->
<div class="a" style="left:65px;top:833px;width:158px;height:30px;overflow:hidden"><div class="a" style="left:0px;top:0px;width:158px;height:88px;background:#fff;box-shadow:0 0 2px rgba(0,0,0,0.15);overflow:hidden"><div class="a" style="left:0;top:0;width:899px;height:505px;transform:scale(0.1757508342602892,0.17425742574257425);transform-origin:0 0"><div class="t" style="left:0;top:26px;width:899px;text-align:center;font-family:'Liberation Serif',serif;font-size:28px;color:#222">Потенциал искусственного интеллекта в криминологии</div><div class="a" style="left:162px;top:94px;width:251px;height:206px;background:#7fba4c;overflow:hidden;text-align:center;font-family:'Liberation Serif',serif;font-size:13px;line-height:17px;color:#fff;padding:6px">Коррупционные схемы становятся<br>всё более сложными и скрытыми<br>с использованием цифровых<br>технологий и криптовалют<br>для легализации доходов<br>и сокрытия следов<br>преступной деятельности<br>в различных сферах</div><div class="a" style="left:420px;top:94px;width:246px;height:206px;background:#ffbb14;overflow:hidden;text-align:center;font-family:'Liberation Serif',serif;font-size:13px;line-height:17px;color:#fff;padding:6px">Коррупционные схемы становятся<br>всё более сложными и скрытыми<br>с использованием цифровых<br>технологий и криптовалют<br>для легализации доходов<br>и сокрытия следов<br>преступной деятельности<br>в различных сферах</div><svg style="left:0;top:0" width="899" height="505" viewBox="0 0 899 505"><path d="M0 478 C40 476.5 70 474.5 100 471.5 C150 466 200 460 250 456.5 C300 453 380 449.5 460 449 C530 448.5 590 457 640 468 C700 480 760 492 807 506 L0 506Z" fill="url(#wg)"/><path d="M0 493 C120 494 250 480 350 462 C400 453 440 449 470 448" fill="none" stroke="#ffd09a" stroke-width="3" opacity="0.9"/></svg></div></div></div>
<svg style="left:127px;top:877px" width="18" height="18" viewBox="0 0 18 18"><path d="M9 0 V18 M0 9 H18" stroke="#333" stroke-width="2"/></svg>

<!-- ===== main area ===== -->
<div class="a" style="left:353px;top:355px;width:899px;height:506px;background:#fff;box-shadow:0 0 3px rgba(0,0,0,0.18);overflow:hidden" id="slide">
  <svg style="left:0;top:0" width="899" height="506" viewBox="0 0 899 506"><defs><linearGradient id="wg" x1="0" y1="0" x2="0" y2="1"><stop offset="0" stop-color="#f57e22"/><stop offset="0.4" stop-color="#f36a12"/><stop offset="1" stop-color="#f55d08"/></linearGradient></defs>
  <path d="M0 478 C40 476.5 70 474.5 100 471.5 C150 466 200 460 250 456.5 C300 453 380 449.5 460 449 C530 448.5 590 457 640 468 C700 480 760 492 807 506 L0 506Z" fill="url(#wg)"/>
  <path d="M60 478 C200 470 330 455 470 449" fill="none" stroke="#f8a060" stroke-width="1" opacity="0.5"/>
  <path d="M0 493 C120 494 250 480 350 462 C400 453 440 449 470 448" fill="none" stroke="#ffd09a" stroke-width="1.3" opacity="0.9"/>
  </svg>
</div>
<div class="a" style="left:1406px;top:338px;width:1px;height:600px;background:#dcdcdc"></div>
<svg style="left:1392px;top:342px" width="9" height="7" viewBox="0 0 9 7"><path d="M4.5 0.5 L8.5 6.5 H0.5Z" fill="#666"/></svg>
<div class="a" style="left:1392px;top:381px;width:10px;height:50px;background:#d4d4d4;border-radius:5px"></div>
<svg style="left:1392px;top:825px" width="9" height="7" viewBox="0 0 9 7"><path d="M4.5 6.5 L8.5 0.5 H0.5Z" fill="#666"/></svg>
<svg style="left:1393px;top:842px" width="8" height="11" viewBox="0 0 8 11"><path d="M4 0.5 L7.5 5 H0.5Z M4 5 L7.5 9.5 H0.5Z" fill="#555"/></svg>
<svg style="left:1393px;top:860px" width="8" height="11" viewBox="0 0 8 11"><path d="M4 5 L7.5 0.5 H0.5Z M4 10 L7.5 5.5 H0.5Z" fill="#555"/></svg>

<!-- sidebar icons -->
<div class="a" style="left:1431px;top:363px;width:17px;height:2.2px;background:#8a8a8a"></div>
<svg style="left:1430px;top:392px" width="21" height="20" viewBox="0 0 21 20"><path d="M7 5.5 V1 H14 V5.5 M1 10 V1 H7" fill="none" stroke="#444" stroke-width="1.5"/><rect x="7" y="5.8" width="13" height="11.5" fill="none" stroke="#444" stroke-width="1.5"/><path d="M2.2 12.5 C2 15.5 3.5 17 6.5 17" fill="none" stroke="#444" stroke-width="1.4"/><path d="M4.8 14.8 L7 17 L4.8 19.2" fill="none" stroke="#444" stroke-width="1.4"/></svg>
<svg style="left:1430px;top:440px" width="20" height="19" viewBox="0 0 20 19"><path d="M11 1 L13.4 6.3 L19 7 L15 11 L16.2 17.5 L11 14.5" fill="none" stroke="#444" stroke-width="1.4" stroke-linejoin="round"/><path d="M11 1 L8.6 6.3 L3.2 7 L6.5 10.5" fill="none" stroke="#444" stroke-width="1.4" stroke-linejoin="round"/><path d="M1 11.5 H7 M2 14 H8.5 M3 16.5 H9" stroke="#444" stroke-width="1.2"/></svg>
<svg style="left:1430px;top:488px" width="21" height="17" viewBox="0 0 21 17"><path d="M0.5 4 H2.5 M8 4 H20" stroke="#444" stroke-width="1.4"/><ellipse cx="5.3" cy="4" rx="2.8" ry="3.2" fill="none" stroke="#444" stroke-width="1.4"/><path d="M0.5 12.5 H11 M17 12.5 H20" stroke="#444" stroke-width="1.4"/><ellipse cx="14" cy="12.5" rx="2.8" ry="3.2" fill="none" stroke="#444" stroke-width="1.4"/></svg>
<svg style="left:1430px;top:534px" width="20" height="20" viewBox="0 0 20 20"><path d="M3.2 6 A8.3 8.3 0 1 1 2 10" fill="none" stroke="#444" stroke-width="1.5"/><path d="M1 3 L3 6.8 L6.8 5" fill="none" stroke="#444" stroke-width="1.4"/><path d="M10 5 V10 L13.5 13" fill="none" stroke="#444" stroke-width="1.5"/></svg>
<svg style="left:1430px;top:581px" width="20" height="20" viewBox="0 0 20 20"><circle cx="10" cy="10" r="9" fill="none" stroke="#444" stroke-width="1.4"/><path d="M7.2 7.5 A2.8 2.8 0 1 1 10.5 10.3 C10 10.5 10 11 10 12" fill="none" stroke="#444" stroke-width="1.4"/><circle cx="10" cy="14.8" r="1" fill="#444"/></svg>
<svg style="left:1431px;top:629px" width="18" height="18" viewBox="0 0 18 18"><rect x="1" y="1" width="6.5" height="6.5" rx="1.5" fill="none" stroke="#aaa" stroke-width="1.3"/><rect x="10.5" y="1" width="6.5" height="6.5" rx="1.5" fill="none" stroke="#aaa" stroke-width="1.3"/><rect x="1" y="10.5" width="6.5" height="6.5" rx="1.5" fill="none" stroke="#aaa" stroke-width="1.3"/><rect x="10.5" y="10.5" width="6.5" height="6.5" rx="1.5" fill="none" stroke="#aaa" stroke-width="1.3"/></svg>

<!-- notes -->
<div class="a" style="left:261px;top:880px;width:1145px;height:1px;background:#d6d6d6"></div>
<div class="t" style="left:271px;top:886.5px;font-size:15.5px;color:#9a9a9a">Заметки к слайду</div>
<!-- status bar -->
<div class="a" style="left:15px;top:919px;width:1456px;height:15px;background:#eeeeee;border-top:1px solid #d4d4d4"></div>


<!-- slide text -->
<div class="t" style="left:353px;top:390.6px;width:899px;text-align:center;font-family:'Liberation Serif',serif;font-size:30px;line-height:36px;color:#111">Социально-экономические сложности современной<br>коррупции</div>
<div class="t" style="left:404.5px;top:509.5px;font-family:'Liberation Serif',serif;font-size:26px;line-height:31.6px;color:#111">•</div>
<div class="a" style="left:430.5px;top:509.5px;font-family:'Liberation Serif',serif;font-size:26px;line-height:31.6px;color:#111;white-space:nowrap">
<div style="letter-spacing:1.36px">Современная коррупция характеризуется</div>
<div style="letter-spacing:2.76px">высокой скрытностью и сложностью,</div>
<div style="letter-spacing:0.1px">подрывая доверие к государству. В условиях</div>
<div style="letter-spacing:3.24px">цифровизации классические методы</div>
<div style="letter-spacing:1.42px">расследования требуют технологической</div>
<div>модернизации.</div>
</div>
<!-- cursor -->
<svg style="left:493px;top:627px" width="14" height="22" viewBox="0 0 14 22"><path d="M1 1 V17 L4.8 13.5 L7.5 20 L10 19 L7.3 12.6 H12.5 Z" fill="#fff" stroke="#777" stroke-width="1"/></svg>
<!-- slide image -->
<svg style="left:966px;top:608px;overflow:hidden" width="271" height="228" viewBox="0 0 271 228">
  <defs>
    <linearGradient id="sky" x1="0" y1="0" x2="1" y2="0.6"><stop offset="0" stop-color="#8f97a8"/><stop offset="0.45" stop-color="#a2a8b6"/><stop offset="1" stop-color="#7a8aa6"/></linearGradient>
    <linearGradient id="road" x1="0" y1="0" x2="0" y2="1"><stop offset="0" stop-color="#74767a"/><stop offset="0.5" stop-color="#56585c"/><stop offset="1" stop-color="#4a4c50"/></linearGradient>
    <linearGradient id="walk" x1="0" y1="0" x2="0" y2="1"><stop offset="0" stop-color="#6e6c6a"/><stop offset="1" stop-color="#7c7a78"/></linearGradient>
    <radialGradient id="g1" cx="0.5" cy="0.5" r="0.5"><stop offset="0" stop-color="#1e1814"/><stop offset="0.2" stop-color="#3a3028"/><stop offset="0.32" stop-color="#7a6c5e"/><stop offset="0.55" stop-color="#4a3c32"/><stop offset="0.72" stop-color="#2e241e"/><stop offset="0.86" stop-color="#6a4a30"/><stop offset="1" stop-color="#4a3626"/></radialGradient>
    <filter id="bl" x="-5%" y="-5%" width="110%" height="110%"><feGaussianBlur stdDeviation="0.9"/></filter>
  </defs>
  <g filter="url(#bl)">
  <rect x="-3" y="-3" width="277" height="234" fill="url(#sky)"/>
  <rect x="-3" y="60" width="80" height="40" fill="#b9bcc2" opacity="0.6"/>
  <rect x="-3" y="57" width="15" height="42" fill="#5e5c5c"/>
  <path d="M20 97 L26 68 L32 97Z M30 97 L37 60 L44 97Z M40 97 L46 72 L52 97Z" fill="#2c3a2c"/>
  <rect x="18" y="13" width="2.5" height="85" fill="#5a5a60"/>
  <circle cx="14" cy="13" r="3" fill="#f2eee6"/><circle cx="24" cy="13" r="3" fill="#f2eee6"/>
  <rect x="248" y="32" width="2.5" height="65" fill="#5a5a60"/>
  <circle cx="244" cy="31" r="3" fill="#f2eee6"/><circle cx="254" cy="31" r="3" fill="#f2eee6"/>
  <rect x="222" y="66" width="52" height="32" fill="#b4b0a8"/>
  <rect x="210" y="75" width="20" height="22" fill="#8a8e92"/>
  <rect x="37" y="44" width="36" height="50" fill="#cac4ba"/>
  <rect x="37" y="37" width="36" height="8" fill="#e2cd96"/>
  <rect x="48" y="17" width="19" height="21" fill="#a8a094"/>
  <rect x="72" y="47" width="24" height="47" fill="#9a8c7c"/>
  <rect x="95" y="25" width="66" height="50" fill="#cfc4ae"/>
  <rect x="110" y="2" width="40" height="25" fill="#d8c28e"/>
  <rect x="118" y="-3" width="24" height="6" fill="#9a9488"/>
  <rect x="102" y="67" width="64" height="27" fill="#7a6c5c"/>
  <rect x="102" y="65" width="64" height="5" fill="#b4a898"/>
  <rect x="161" y="48" width="20" height="46" fill="#9a8c7c"/>
  <rect x="179" y="44" width="36" height="50" fill="#cac4ba"/>
  <rect x="179" y="40" width="36" height="7" fill="#e0c890"/>
  <rect x="189" y="22" width="21" height="19" fill="#a8a094"/>
  <rect x="-3" y="93" width="277" height="50" fill="url(#road)"/>
  <path d="M-3 123 L115 110 L117 113 L-3 127Z" fill="#b8b8b8" opacity="0.75"/>
  <path d="M-3 143 L60 138 L115 130 L150 128 L274 150 L274 231 L-3 231Z" fill="url(#walk)"/>
  <path d="M0 215 L30 203 L40 212" fill="none" stroke="#3a3a3a" stroke-width="1.5"/>
  <rect x="245" y="105" width="29" height="65" fill="#3c3a3a"/>
  <circle cx="148" cy="133" r="31" fill="#3e2e22"/>
  <circle cx="148" cy="133" r="28" fill="none" stroke="#6a4a30" stroke-width="6" stroke-dasharray="3 2.5"/>
  <circle cx="148" cy="133" r="24" fill="url(#g1)"/>
  <circle cx="214" cy="133" r="44" fill="#3e2e22"/>
  <circle cx="214" cy="133" r="40" fill="none" stroke="#7a5636" stroke-width="7" stroke-dasharray="3.5 3"/>
  <circle cx="214" cy="133" r="34" fill="url(#g1)"/>
  <circle cx="148" cy="133" r="5" fill="#1e1a16"/>
  <circle cx="214" cy="133" r="7" fill="#1e1a16"/>
  <path d="M58 143 L120 137 L124 150 L66 152Z" fill="#dcdcd8"/>
  <path d="M9 184 L112 166 L122 178 L28 195Z" fill="#d6dbd2"/>
  <path d="M75 175 L110 170 L112 178 L80 183Z" fill="#8aae9a" opacity="0.7"/>
  <path d="M27 213 L50 190 L190 202 L182 226 L40 226Z" fill="#d2cbd0"/>
  <path d="M120 198 L165 203 L170 222 L125 225Z" fill="#9a94a8" opacity="0.7"/>
  <ellipse cx="66" cy="189" rx="8" ry="3" fill="#b8b0a0"/>
  <ellipse cx="105" cy="191" rx="9" ry="3.5" fill="#c8c0b4"/>
  <ellipse cx="150" cy="180" rx="9" ry="3.5" fill="#b0a48c"/>
  <ellipse cx="200" cy="196" rx="10" ry="4" fill="#a89470"/>
  <ellipse cx="236" cy="206" rx="11" ry="4.5" fill="#a8946a"/>
  <ellipse cx="101" cy="213" rx="10" ry="4" fill="#b89a68"/>
  <ellipse cx="145" cy="222" rx="9" ry="4" fill="#a8946a"/>
  </g>
</svg>

<!-- zoom banner -->
<div class="a" style="left:546px;top:155px;width:393px;height:24.5px;background:#232323;border-radius:0 0 5px 5px"></div>
<div class="a" style="left:546px;top:155px;width:268px;height:24.5px;background:#22d457;border-radius:0 0 0 5px"></div>
<div class="t" style="left:571.5px;top:163px;font-size:12.6px;font-weight:700;color:#0c2a14">Вы просматриваете экран</div>
<div class="t" style="left:745px;top:163px;font-size:12.6px;font-weight:700;color:#0c2a14">Ксения</div>
<div class="t" style="left:803.5px;top:163px;font-size:12.7px;font-weight:700;color:#fff">Настройки просмотра</div>


<!-- status bar content (under overlay) -->
<div class="t" style="left:27px;top:926.5px;font-size:14px;color:#444">Слайд 2 / 21</div>
<svg style="left:134px;top:922px" width="18" height="16" viewBox="0 0 18 16"><path d="M5 1 L1 4 L3 8 L4.5 7 V15 H13.5 V7 L15 8 L17 4 L13 1 C12 3 6 3 5 1Z" fill="none" stroke="#555" stroke-width="1.3"/></svg>
<div class="t" style="left:157px;top:926.5px;font-size:14px;color:#444">Orange Waves</div>
<svg style="left:728px;top:925px" width="16" height="12" viewBox="0 0 16 12"><path d="M1 2 H8 M1 6 H15 M1 10 H15 M10 1 L12 3 L14 1" fill="none" stroke="#444" stroke-width="1.4"/></svg>
<div class="t" style="left:749px;top:926.5px;font-size:14px;color:#444">Заметки</div>
<svg style="left:806px;top:929px" width="7" height="5" viewBox="0 0 7 5"><path d="M0.7 0.8 L3.5 3.8 L6.3 0.8" fill="none" stroke="#444" stroke-width="1.4"/></svg>
<div class="a" style="left:840px;top:925.5px;width:14px;height:14px;border:1.4px solid #444;border-radius:2px"></div>
<div class="t" style="left:863px;top:926.5px;font-size:14px;color:#444">Примечания</div>
<div class="a" style="left:973px;top:919px;width:28px;height:15px;background:#d6d6d6;border-radius:3px"></div>
<div class="a" style="left:978px;top:926px;width:16px;height:14px;border:1.4px solid #444"></div>
<div class="a" style="left:1016px;top:926px;width:18px;height:14px;border:1.4px solid #444"></div>
<div class="a" style="left:1045px;top:926px;width:18px;height:14px;border:1.4px solid #444"></div>
<div class="a" style="left:1097px;top:921.5px;width:23px;height:14px;background:#d0602a;border-radius:3px"></div>
<svg style="left:1149px;top:925px" width="16" height="12" viewBox="0 0 16 12"><path d="M1 5 V1 H5 M11 1 H15 V5 M4 4 H12 V11 H4Z" fill="none" stroke="#444" stroke-width="1.4"/></svg>
<div class="t" style="left:1193px;top:926.5px;font-size:14px;color:#444">59%</div>
<div class="a" style="left:1265px;top:930px;width:21px;height:2.5px;background:#444"></div>
<div class="a" style="left:1296px;top:930px;width:36px;height:3px;background:#2f5fb8"></div>
<div class="a" style="left:1332px;top:930.5px;width:88px;height:1.5px;background:#777"></div>
<div class="a" style="left:1328px;top:925px;width:10px;height:10px;background:#666;border-radius:50%"></div>
<svg style="left:1437px;top:923px" width="14" height="14" viewBox="0 0 14 14"><path d="M7 0 V14 M0 7 H14" stroke="#444" stroke-width="2"/></svg>
<!-- zoom overlay -->
<div class="a" style="left:0;top:895px;width:1473px;height:39px;background:rgba(0,0,0,0.69)"></div>
<svg style="left:538px;top:903px" width="22" height="20" viewBox="0 0 22 20"><circle cx="7" cy="5" r="3.6" fill="none" stroke="#fff" stroke-width="1.6"/><path d="M1 18 C1 12 13 12 13 18 Z" fill="none" stroke="#fff" stroke-width="1.6" stroke-linejoin="round"/><circle cx="14.5" cy="7.5" r="3" fill="none" stroke="#fff" stroke-width="1.5"/><path d="M14 18.5 H20.5 C20.5 14 17.5 12.5 14.5 12.8" fill="none" stroke="#fff" stroke-width="1.5"/></svg>
<div class="t" style="left:560px;top:902px;font-size:10px;color:#fff">7</div>
<svg style="left:615px;top:902px" width="25" height="22" viewBox="0 0 25 22"><path d="M7 4 C7 2 8.5 1 11 1 H20 C22.5 1 24 2.5 24 5 V10 C24 12 23 13 21 13" fill="none" stroke="#fff" stroke-width="1.6"/><path d="M1 9 C1 6.5 2.5 5 5 5 H16 C18.5 5 20 6.5 20 9 V14 C20 16.5 18.5 18 16 18 H8 L4 21 V18 C2 17.5 1 16 1 14Z" fill="none" stroke="#fff" stroke-width="1.6" stroke-linejoin="round"/><circle cx="6.5" cy="11.5" r="1.2" fill="#fff"/><circle cx="10.5" cy="11.5" r="1.2" fill="#fff"/><circle cx="14.5" cy="11.5" r="1.2" fill="#fff"/></svg>
<svg style="left:653px;top:904px" width="10" height="6" viewBox="0 0 10 6"><path d="M1 5 L5 1 L9 5" fill="none" stroke="#ccc" stroke-width="1.3"/></svg>
<svg style="left:695px;top:902px" width="26" height="21" viewBox="0 0 26 21"><path d="M13 20 C8 16 1 12 1 6.5 C1 3 3.5 1 6.8 1 C9.5 1 11.5 2.5 13 4.5 C14.5 2.5 16.5 1 19.2 1 C22.5 1 25 3 25 6.5 C25 12 18 16 13 20Z" fill="none" stroke="#fff" stroke-width="1.6" stroke-linejoin="round"/></svg>
<div class="a" style="left:808px;top:901.5px;width:24px;height:20.5px;background:#1ed47c;border-radius:3px"></div>
<svg style="left:813px;top:904px" width="14" height="15" viewBox="0 0 14 15"><path d="M7 1.5 L12.5 7.5 H9 V13.5 H5 V7.5 H1.5Z" fill="#0d3a22"/></svg>
<svg style="left:929px;top:898px" width="27" height="27" viewBox="0 0 27 27"><defs><linearGradient id="sp" x1="0" y1="0" x2="1" y2="1"><stop offset="0" stop-color="#d6efff"/><stop offset="0.5" stop-color="#8cc8f0"/><stop offset="1" stop-color="#5aa0e0"/></linearGradient></defs><path d="M11 5 C12 12 14 14 21 15 C14 16 12 18 11 25 C10 18 8 16 1 15 C8 14 10 12 11 5Z" fill="url(#sp)"/><path d="M21.5 1 C22 3.5 22.5 4 25 4.5 C22.5 5 22 5.5 21.5 8 C21 5.5 20.5 5 18 4.5 C20.5 4 21 3.5 21.5 1Z" fill="#c8e6ff"/></svg>
<svg style="left:1022px;top:901px" width="25" height="23" viewBox="0 0 25 23"><circle cx="12.5" cy="11.5" r="10.8" fill="none" stroke="#fff" stroke-width="1.6"/><circle cx="7.5" cy="11.5" r="1.4" fill="#fff"/><circle cx="12.5" cy="11.5" r="1.4" fill="#fff"/><circle cx="17.5" cy="11.5" r="1.4" fill="#fff"/></svg>

<div class="t" style="left:516px;top:931.5px;font-size:12px;color:#fff">Участники</div>
<div class="t" style="left:620px;top:931.5px;font-size:12px;color:#fff">Чат</div>
<div class="t" style="left:686px;top:931.5px;font-size:12px;color:#fff">Реакции</div>
<div class="t" style="left:788px;top:931.5px;font-size:12px;color:#fff">Поделиться</div>
<div class="t" style="left:906px;top:931.5px;font-size:12px;color:#fff">AI Companion</div>
<div class="t" style="left:1022px;top:931.5px;font-size:12px;color:#fff">Ещё</div>
</body></html>
